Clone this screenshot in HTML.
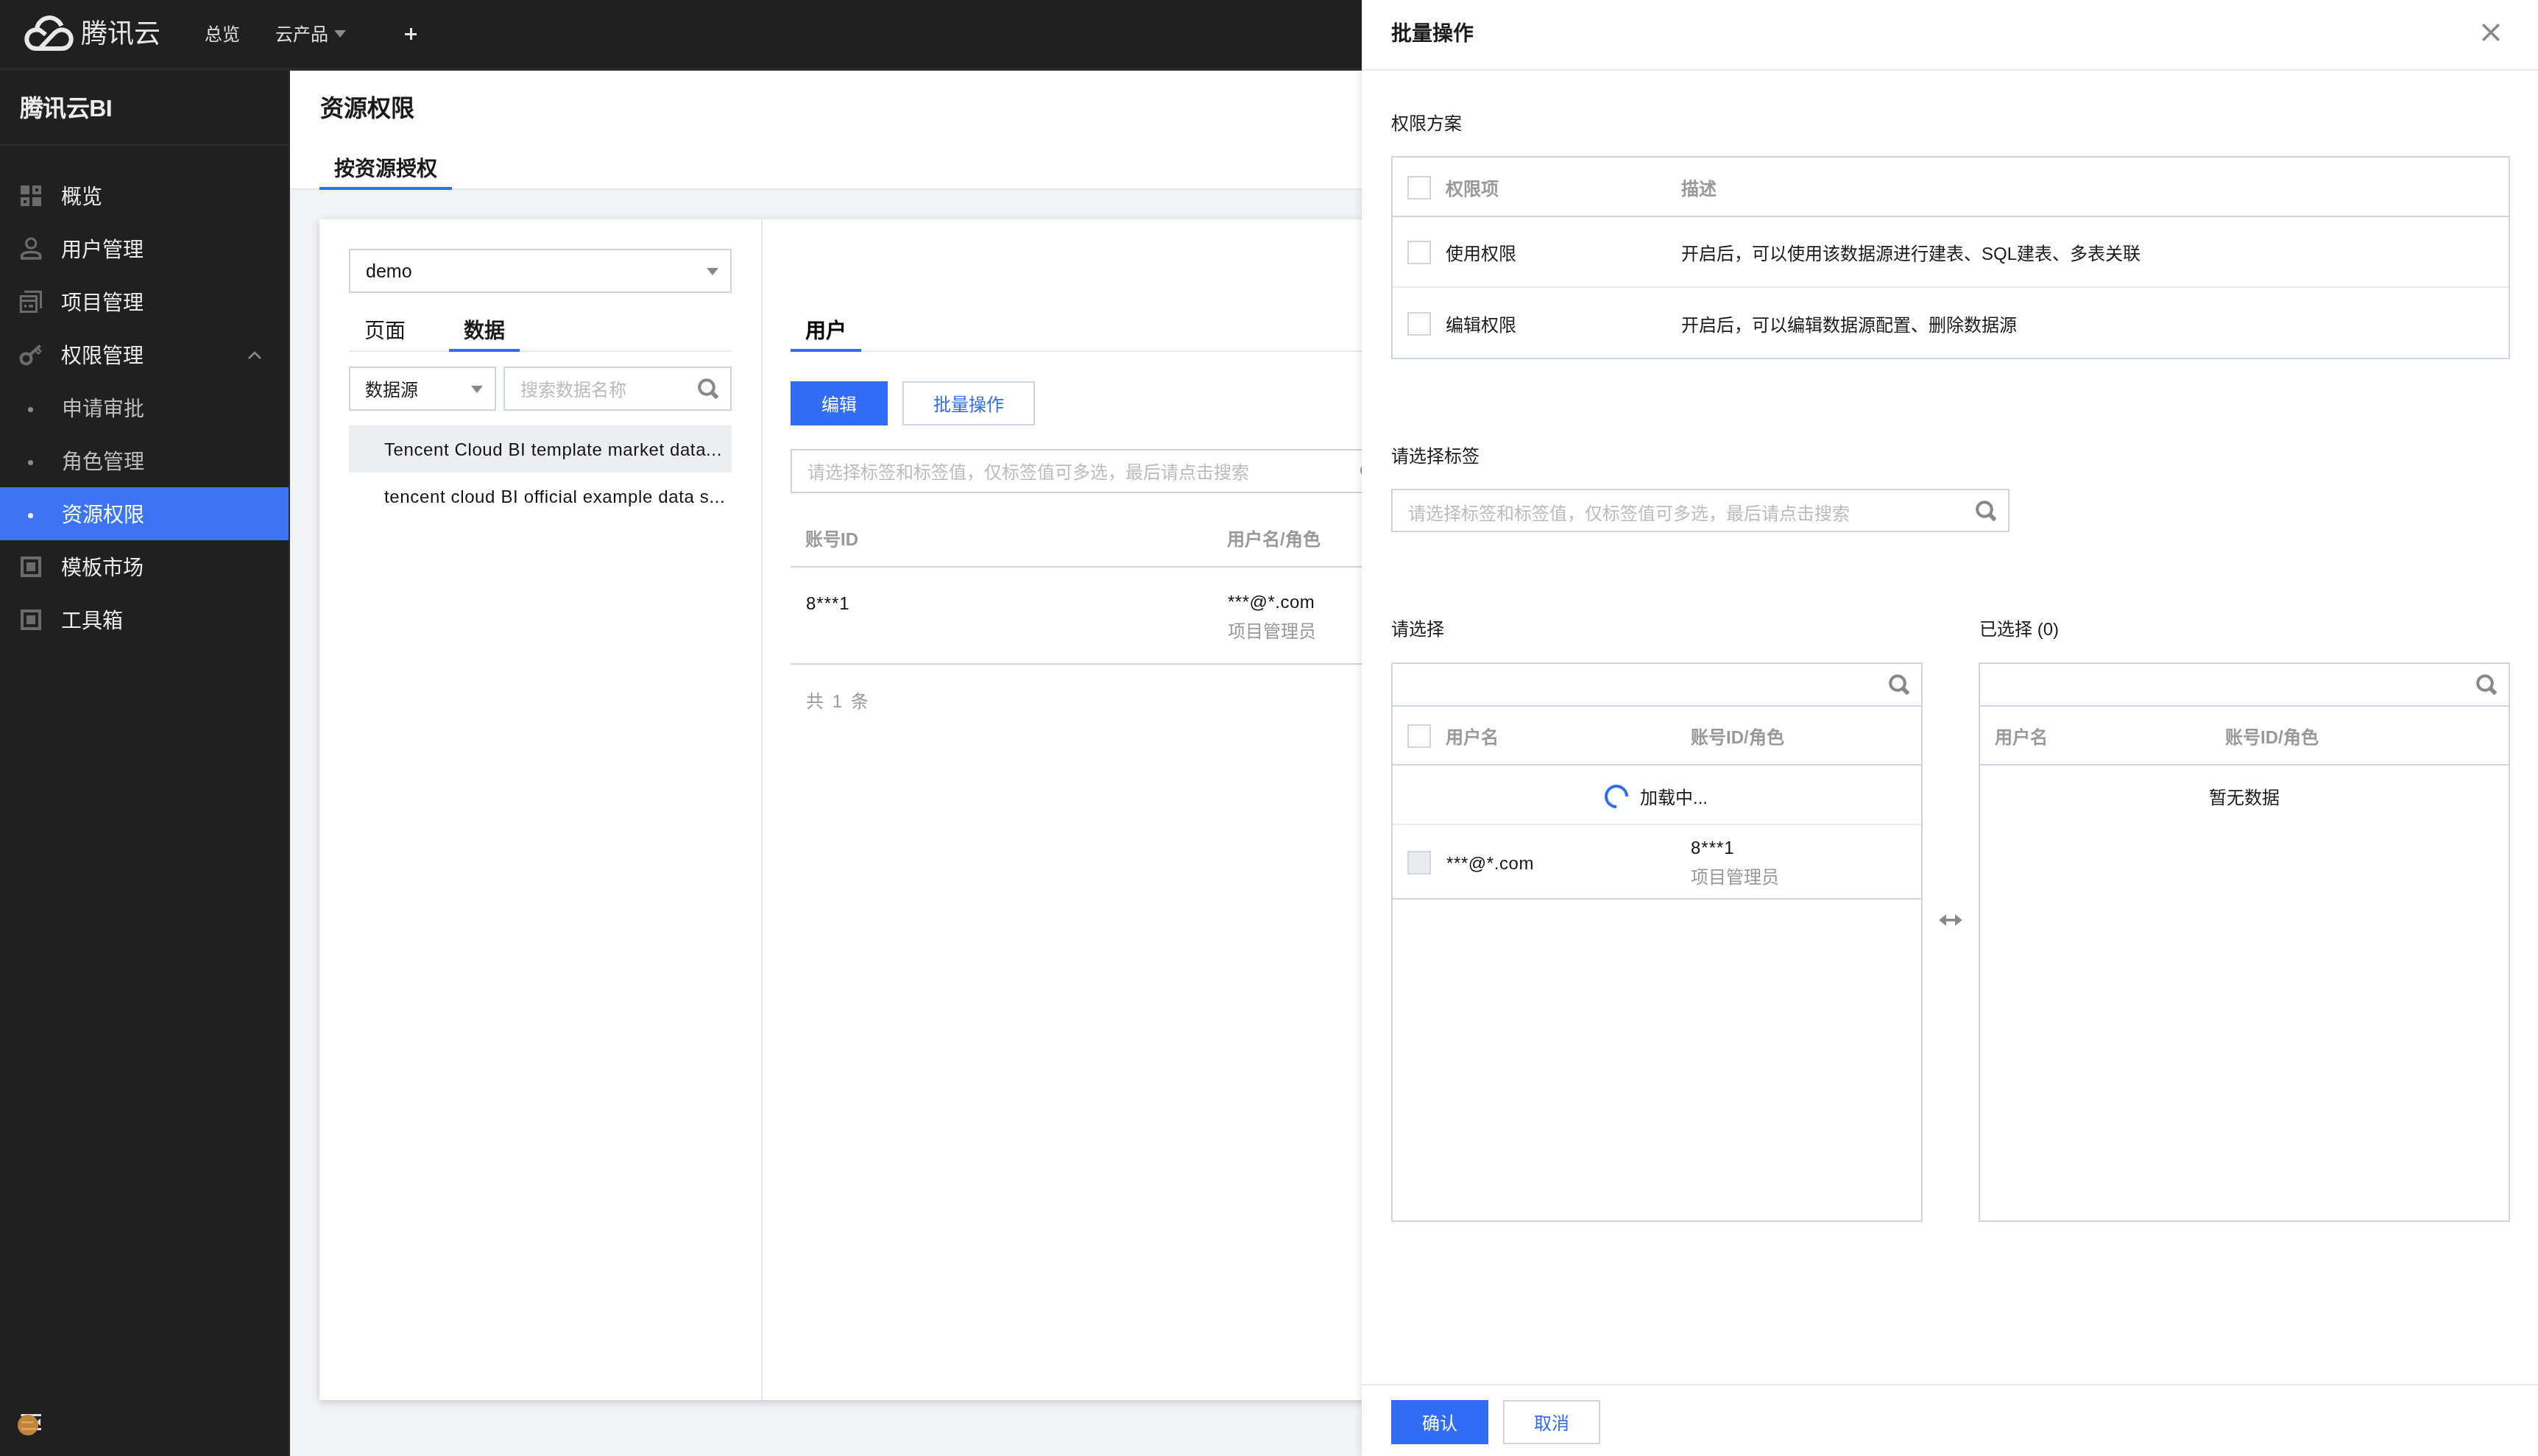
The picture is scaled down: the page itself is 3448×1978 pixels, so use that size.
<!DOCTYPE html>
<html lang="zh-CN"><head><meta charset="utf-8">
<style>
*{box-sizing:border-box;margin:0;padding:0}
html,body{width:3448px;height:1978px;overflow:hidden}
body{position:relative;background:#f2f3f6;font-family:"Liberation Sans",sans-serif;color:#000;}
.a{position:absolute;white-space:nowrap;will-change:transform}
.t24{font-size:24px;line-height:43px}
.t28{font-size:28px;line-height:44px}
.b{font-weight:bold}
.m{font-weight:500}
.gray{color:#999}
.box{position:absolute;border:2px solid #cfd5de;background:#fff}
.hl{position:absolute;height:2px;background:#cfd5de}
.hl2{position:absolute;height:2px;background:#e6e9ee}
.cb{position:absolute;width:32px;height:32px;border:2px solid #cfd5de;background:#fff}
.tri{position:absolute;width:0;height:0;border-left:8px solid transparent;border-right:8px solid transparent;border-top:10px solid #888}
.ico{position:absolute}
</style></head>
<body>
<!-- TOP NAV -->
<div class="a" style="left:0;top:0;width:3448px;height:92px;background:#202020"></div>
<div class="a" style="left:0;top:92px;width:3448px;height:4px;background:#2b2b2b"></div>
<svg class="ico" style="left:30px;top:17px" width="74" height="56" viewBox="30 17 74 56">
 <g fill="none" stroke="#e8e8e8" stroke-width="6">
  <path d="M50 39 A17.5 17.5 0 0 1 83.5 35"/>
  <path d="M62 47 L55 41.5 Q52 40 49 40.5 A12.5 12.5 0 0 0 49 66 L84 66 A12.5 12.5 0 0 0 84 40.5 Q79 40.5 74 45 L54 66"/>
 </g>
</svg>
<div class="a" style="left:110px;top:21px;font-size:36px;line-height:50px;color:#e8e8e8">腾讯云</div>
<div class="a t24" style="left:278px;top:25px;color:#e0e0e0">总览</div>
<div class="a t24" style="left:374px;top:25px;color:#e0e0e0">云产品</div>
<div class="tri" style="left:454px;top:41px;border-top-color:#8c8c8c"></div>
<div class="a" style="left:550px;top:44.5px;width:16px;height:3px;background:#e8e8e8"></div>
<div class="a" style="left:556.5px;top:38px;width:3px;height:16px;background:#e8e8e8"></div>

<!-- SIDEBAR -->
<div class="a" style="left:0;top:96px;width:392px;height:1882px;background:#202020"></div>
<div class="a" style="left:392px;top:96px;width:2px;height:1882px;background:#2b2b2b"></div>
<div class="a b" style="left:27px;top:126px;font-size:32px;line-height:43px;letter-spacing:-0.6px;color:#ececec">腾讯云BI</div>
<div class="a" style="left:0;top:196px;width:392px;height:2px;background:#2c2c2c"></div>

<!-- items -->
<svg class="ico" style="left:28px;top:252px" width="28" height="28" viewBox="0 0 28 28">
 <g fill="#6b6b6b"><rect x="0" y="0" width="12" height="12"/><rect x="16" y="16" width="12" height="12"/>
 <path d="M16 0h12v12h-12z M20 4v4h4v-4z" fill-rule="evenodd"/><path d="M0 16h12v12h-12z M4 20v4h4v-4z" fill-rule="evenodd"/></g>
</svg>
<div class="a t28" style="left:83px;top:246px;color:#ececec">概览</div>

<svg class="ico" style="left:20px;top:315px" width="45" height="45" viewBox="20 315 45 45">
 <g fill="none" stroke="#6b6b6b"><circle cx="42.2" cy="330.6" r="6.6" stroke-width="3.2"/><path d="M29.8 351 V348 Q29.8 342.5 42.2 342.5 Q54.6 342.5 54.6 348 V351 Z" stroke-width="3.6"/></g>
</svg>
<div class="a t28" style="left:83px;top:318px;color:#ececec">用户管理</div>

<svg class="ico" style="left:20px;top:390px" width="45" height="40" viewBox="20 390 45 40">
 <g fill="none" stroke="#6b6b6b" stroke-width="3"><path d="M28.3 402.5 H49.5 V423.5 H28.3 Z"/><path d="M28.3 408.6 H49.5"/><path d="M33 396.3 H55.5 V419"/></g>
 <g fill="#6b6b6b"><rect x="32.8" y="414" width="3.2" height="3.6"/><rect x="39" y="414" width="6" height="3.6"/></g>
</svg>
<div class="a t28" style="left:83px;top:390px;color:#ececec">项目管理</div>

<svg class="ico" style="left:20px;top:460px" width="45" height="40" viewBox="20 460 45 40">
 <g fill="none" stroke="#6b6b6b"><circle cx="35.5" cy="487.3" r="7" stroke-width="4.2"/><path d="M40.5 482.3 L54.5 469.5" stroke-width="4.2"/></g>
 <path d="M46.5 476.5 L52 482 L57 477 L51.5 471.5 Z M50 477.2 L51.8 479 L53.6 477.2 L51.8 475.4 Z" fill="#6b6b6b" fill-rule="evenodd"/>
</svg>
<div class="a t28" style="left:83px;top:462px;color:#ececec">权限管理</div>
<svg class="ico" style="left:336px;top:475px" width="20" height="14" viewBox="0 0 20 14">
 <path d="M2 12 L10 4 L18 12" fill="none" stroke="#8a8a8a" stroke-width="2.5"/>
</svg>

<div class="a" style="left:38px;top:553px;width:7px;height:7px;border-radius:50%;background:#8a8a8a"></div>
<div class="a t28" style="left:84px;top:534px;color:#bdbdbd">申请审批</div>
<div class="a" style="left:38px;top:625px;width:7px;height:7px;border-radius:50%;background:#8a8a8a"></div>
<div class="a t28" style="left:84px;top:606px;color:#bdbdbd">角色管理</div>

<div class="a" style="left:0;top:662px;width:392px;height:72px;background:#3c74f5"></div>
<div class="a" style="left:38px;top:697px;width:7px;height:7px;border-radius:50%;background:#f0f3ff"></div>
<div class="a t28" style="left:84px;top:678px;color:#ffffff">资源权限</div>

<div class="a" style="left:28px;top:756px;width:28px;height:28px;border:4px solid #6b6b6b"></div>
<div class="a" style="left:36px;top:764px;width:12px;height:12px;background:#6b6b6b"></div>
<div class="a t28" style="left:83px;top:750px;color:#ececec">模板市场</div>
<div class="a" style="left:28px;top:828px;width:28px;height:28px;border:4px solid #6b6b6b"></div>
<div class="a" style="left:36px;top:836px;width:12px;height:12px;background:#6b6b6b"></div>
<div class="a t28" style="left:83px;top:822px;color:#ececec">工具箱</div>

<!-- bottom icon -->
<svg class="ico" style="left:20px;top:1914px" width="40" height="40" viewBox="20 1914 40 40">
 <g fill="#e0e0e0"><rect x="28.5" y="1921" width="27.5" height="3"/><rect x="28.5" y="1940" width="27.5" height="3"/><path d="M55 1927 v10 l-6 -5 z"/></g>
 <circle cx="38" cy="1936" r="14" fill="#c0843a"/>
 <g fill="#e6a65c"><rect x="29" y="1931" width="16" height="2.5"/><rect x="29" y="1940" width="20" height="2.5"/></g>
</svg>

<!-- PAGE HEADER -->
<div class="a" style="left:394px;top:96px;width:3054px;height:160px;background:#fff"></div>
<div class="a" style="left:394px;top:256px;width:3054px;height:2px;background:#e7e9ee"></div>
<div class="a b" style="left:435px;top:127px;font-size:32px;line-height:41.5px;color:#1a1a1a">资源权限</div>
<div class="a b t28" style="left:454px;top:208px;color:#1a1a1a">按资源授权</div>
<div class="a" style="left:434px;top:254px;width:180px;height:4px;background:#306cf4"></div>

<!-- CARD -->
<div class="a" style="left:434px;top:298px;width:2974px;height:1604px;background:#fff;box-shadow:0 3px 10px rgba(54,58,80,0.24)"></div>
<div class="a" style="left:1034px;top:298px;width:2px;height:1604px;background:#e6e9ee"></div>

<!-- LEFT PANEL -->
<div class="box" style="left:474px;top:338px;width:520px;height:60px"></div>
<div class="a" style="left:497px;top:348px;font-size:25px;line-height:40px;color:#111">demo</div>
<div class="tri" style="left:960px;top:364px"></div>

<div class="a t28" style="left:495px;top:428px;color:#1a1a1a">页面</div>
<div class="a b t28" style="left:630px;top:428px;color:#1a1a1a">数据</div>
<div class="hl2" style="left:474px;top:476px;width:520px"></div>
<div class="a" style="left:610px;top:474px;width:96px;height:4px;background:#306cf4"></div>

<div class="box" style="left:474px;top:498px;width:200px;height:60px"></div>
<div class="a t24" style="left:496px;top:508px;color:#1a1a1a">数据源</div>
<div class="tri" style="left:640px;top:524px"></div>
<div class="box" style="left:684px;top:498px;width:310px;height:60px"></div>
<div class="a t24" style="left:707px;top:508px;color:#bbbbbb">搜索数据名称</div>
<svg class="ico srch" style="left:948px;top:514px" width="28" height="28" viewBox="0 0 28 28">
 <circle cx="12" cy="12" r="9.8" fill="none" stroke="#888" stroke-width="4"/><path d="M19 19 L26.5 26.5" stroke="#888" stroke-width="5.5"/>
</svg>

<div class="a" style="left:474px;top:578px;width:520px;height:64px;background:#eceef2"></div>
<div class="a t24" style="left:522px;top:589px;letter-spacing:0.6px;color:#111">Tencent Cloud BI template market data...</div>
<div class="a t24" style="left:522px;top:653px;letter-spacing:0.64px;color:#111">tencent cloud BI official example data s...</div>

<!-- RIGHT PANEL -->
<div class="a b t28" style="left:1094px;top:428px;color:#000">用户</div>
<div class="hl2" style="left:1074px;top:476px;width:2334px"></div>
<div class="a" style="left:1074px;top:474px;width:96px;height:4px;background:#306cf4"></div>

<div class="a" style="left:1074px;top:518px;width:132px;height:60px;background:#306cf4"></div>
<div class="a t24" style="left:1116px;top:528px;color:#fff">编辑</div>
<div class="box" style="left:1226px;top:518px;width:180px;height:60px"></div>
<div class="a t24" style="left:1268px;top:528px;color:#306cf4">批量操作</div>

<div class="box" style="left:1074px;top:610px;width:2334px;height:60px"></div>
<svg class="ico srch" style="left:1848px;top:627px" width="28" height="28" viewBox="0 0 28 28">
 <circle cx="12" cy="12" r="9.8" fill="none" stroke="#888" stroke-width="4"/><path d="M19 19 L26.5 26.5" stroke="#888" stroke-width="5.5"/>
</svg>
<div class="a t24" style="left:1097px;top:620px;color:#bbbbbb">请选择标签和标签值，仅标签值可多选，最后请点击搜索</div>

<div class="a b t24" style="left:1094px;top:711px;color:#999">账号ID</div>
<div class="a b t24" style="left:1667px;top:711px;color:#999">用户名/角色</div>
<div class="hl" style="left:1074px;top:769px;width:2334px"></div>
<div class="a t24" style="left:1095px;top:798px;letter-spacing:1px;color:#111">8***1</div>
<div class="a t24" style="left:1668px;top:796px;letter-spacing:0.5px;color:#111">***@*.com</div>
<div class="a t24" style="left:1668px;top:836px;color:#999">项目管理员</div>
<div class="hl" style="left:1074px;top:901px;width:2334px"></div>
<div class="a t24" style="left:1095px;top:931px;color:#999;word-spacing:5px">共 1 条</div>

<!-- DRAWER -->
<div class="a" style="left:1850px;top:0;width:1598px;height:1978px;background:#fff;box-shadow:-3px 0 8px rgba(30,40,70,0.10)"></div>
<div class="a b t28" style="left:1890px;top:24px;color:#1a1a1a">批量操作</div>
<svg class="ico" style="left:3370px;top:30px" width="28" height="28" viewBox="0 0 28 28">
 <path d="M3.2 3.2 L24.8 24.8 M24.8 3.2 L3.2 24.8" stroke="#888" stroke-width="3.5"/>
</svg>
<div class="hl2" style="left:1850px;top:94px;width:1598px"></div>

<div class="a t24" style="left:1890px;top:146px;color:#1a1a1a">权限方案</div>
<div class="box" style="left:1890px;top:212px;width:1520px;height:276px"></div>
<div class="hl" style="left:1890px;top:293px;width:1520px"></div>
<div class="hl2" style="left:1892px;top:389px;width:1516px"></div>
<div class="cb" style="left:1912px;top:239px"></div>
<div class="a b t24" style="left:1964px;top:235px;color:#999">权限项</div>
<div class="a b t24" style="left:2284px;top:235px;color:#999">描述</div>
<div class="cb" style="left:1912px;top:327px"></div>
<div class="a t24" style="left:1964px;top:323px;color:#1a1a1a">使用权限</div>
<div class="a t24" style="left:2284px;top:323px;color:#1a1a1a">开启后，可以使用该数据源进行建表、SQL建表、多表关联</div>
<div class="cb" style="left:1912px;top:424px"></div>
<div class="a t24" style="left:1964px;top:420px;color:#1a1a1a">编辑权限</div>
<div class="a t24" style="left:2284px;top:420px;color:#1a1a1a">开启后，可以编辑数据源配置、删除数据源</div>

<div class="a t24" style="left:1890px;top:598px;color:#1a1a1a">请选择标签</div>
<div class="box" style="left:1890px;top:664px;width:840px;height:59px"></div>
<div class="a t24" style="left:1913px;top:676px;color:#bbbbbb">请选择标签和标签值，仅标签值可多选，最后请点击搜索</div>
<svg class="ico srch" style="left:2684px;top:680px" width="28" height="28" viewBox="0 0 28 28">
 <circle cx="12" cy="12" r="9.8" fill="none" stroke="#888" stroke-width="4"/><path d="M19 19 L26.5 26.5" stroke="#888" stroke-width="5.5"/>
</svg>

<div class="a t24" style="left:1890px;top:833px;color:#1a1a1a">请选择</div>
<div class="a t24" style="left:2689px;top:833px;color:#1a1a1a">已选择 (0)</div>

<!-- left transfer box -->
<div class="box" style="left:1890px;top:900px;width:722px;height:760px"></div>
<svg class="ico srch" style="left:2566px;top:916px" width="28" height="28" viewBox="0 0 28 28">
 <circle cx="12" cy="12" r="9.8" fill="none" stroke="#888" stroke-width="4"/><path d="M19 19 L26.5 26.5" stroke="#888" stroke-width="5.5"/>
</svg>
<div class="hl" style="left:1890px;top:958px;width:722px"></div>
<div class="cb" style="left:1912px;top:984px"></div>
<div class="a b t24" style="left:1964px;top:980px;color:#999">用户名</div>
<div class="a b t24" style="left:2297px;top:980px;color:#999">账号ID/角色</div>
<div class="hl" style="left:1890px;top:1038px;width:722px"></div>
<svg class="ico" style="left:2178px;top:1064px" width="36" height="36" viewBox="0 0 36 36">
 <path d="M32 18 A14 14 0 1 0 18 32" fill="none" stroke="#306cf4" stroke-width="4"/>
</svg>
<div class="a t24" style="left:2228px;top:1062px;color:#1a1a1a">加载中...</div>
<div class="hl2" style="left:1892px;top:1119px;width:718px"></div>
<div class="a" style="left:1912px;top:1156px;width:32px;height:32px;border:2px solid #cfd5de;background:#e8eaee"></div>
<div class="a t24" style="left:1965px;top:1151px;letter-spacing:0.6px;color:#111">***@*.com</div>
<div class="a t24" style="left:2297px;top:1130px;letter-spacing:1px;color:#111">8***1</div>
<div class="a t24" style="left:2297px;top:1170px;color:#999">项目管理员</div>
<div class="hl" style="left:1890px;top:1220px;width:722px"></div>

<svg class="ico" style="left:2632px;top:1240px" width="36" height="20" viewBox="0 0 36 20">
 <g fill="#888"><path d="M2.2 9.9 L11.9 2 V17.7 Z"/><path d="M33.7 9.9 L24 2 V17.7 Z"/><rect x="11" y="8.15" width="14" height="3.5"/></g>
</svg>

<!-- right transfer box -->
<div class="box" style="left:2688px;top:900px;width:722px;height:760px"></div>
<svg class="ico srch" style="left:3364px;top:916px" width="28" height="28" viewBox="0 0 28 28">
 <circle cx="12" cy="12" r="9.8" fill="none" stroke="#888" stroke-width="4"/><path d="M19 19 L26.5 26.5" stroke="#888" stroke-width="5.5"/>
</svg>
<div class="hl" style="left:2688px;top:958px;width:722px"></div>
<div class="a b t24" style="left:2710px;top:980px;color:#999">用户名</div>
<div class="a b t24" style="left:3023px;top:980px;color:#999">账号ID/角色</div>
<div class="hl" style="left:2688px;top:1038px;width:722px"></div>
<div class="a t24" style="left:3001px;top:1062px;color:#1a1a1a">暂无数据</div>

<!-- footer -->
<div class="hl2" style="left:1850px;top:1880px;width:1598px"></div>
<div class="a" style="left:1890px;top:1902px;width:132px;height:60px;background:#306cf4"></div>
<div class="a t24" style="left:1932px;top:1912px;color:#fff">确认</div>
<div class="box" style="left:2042px;top:1902px;width:132px;height:60px"></div>
<div class="a t24" style="left:2084px;top:1912px;color:#306cf4">取消</div>
</body></html>
